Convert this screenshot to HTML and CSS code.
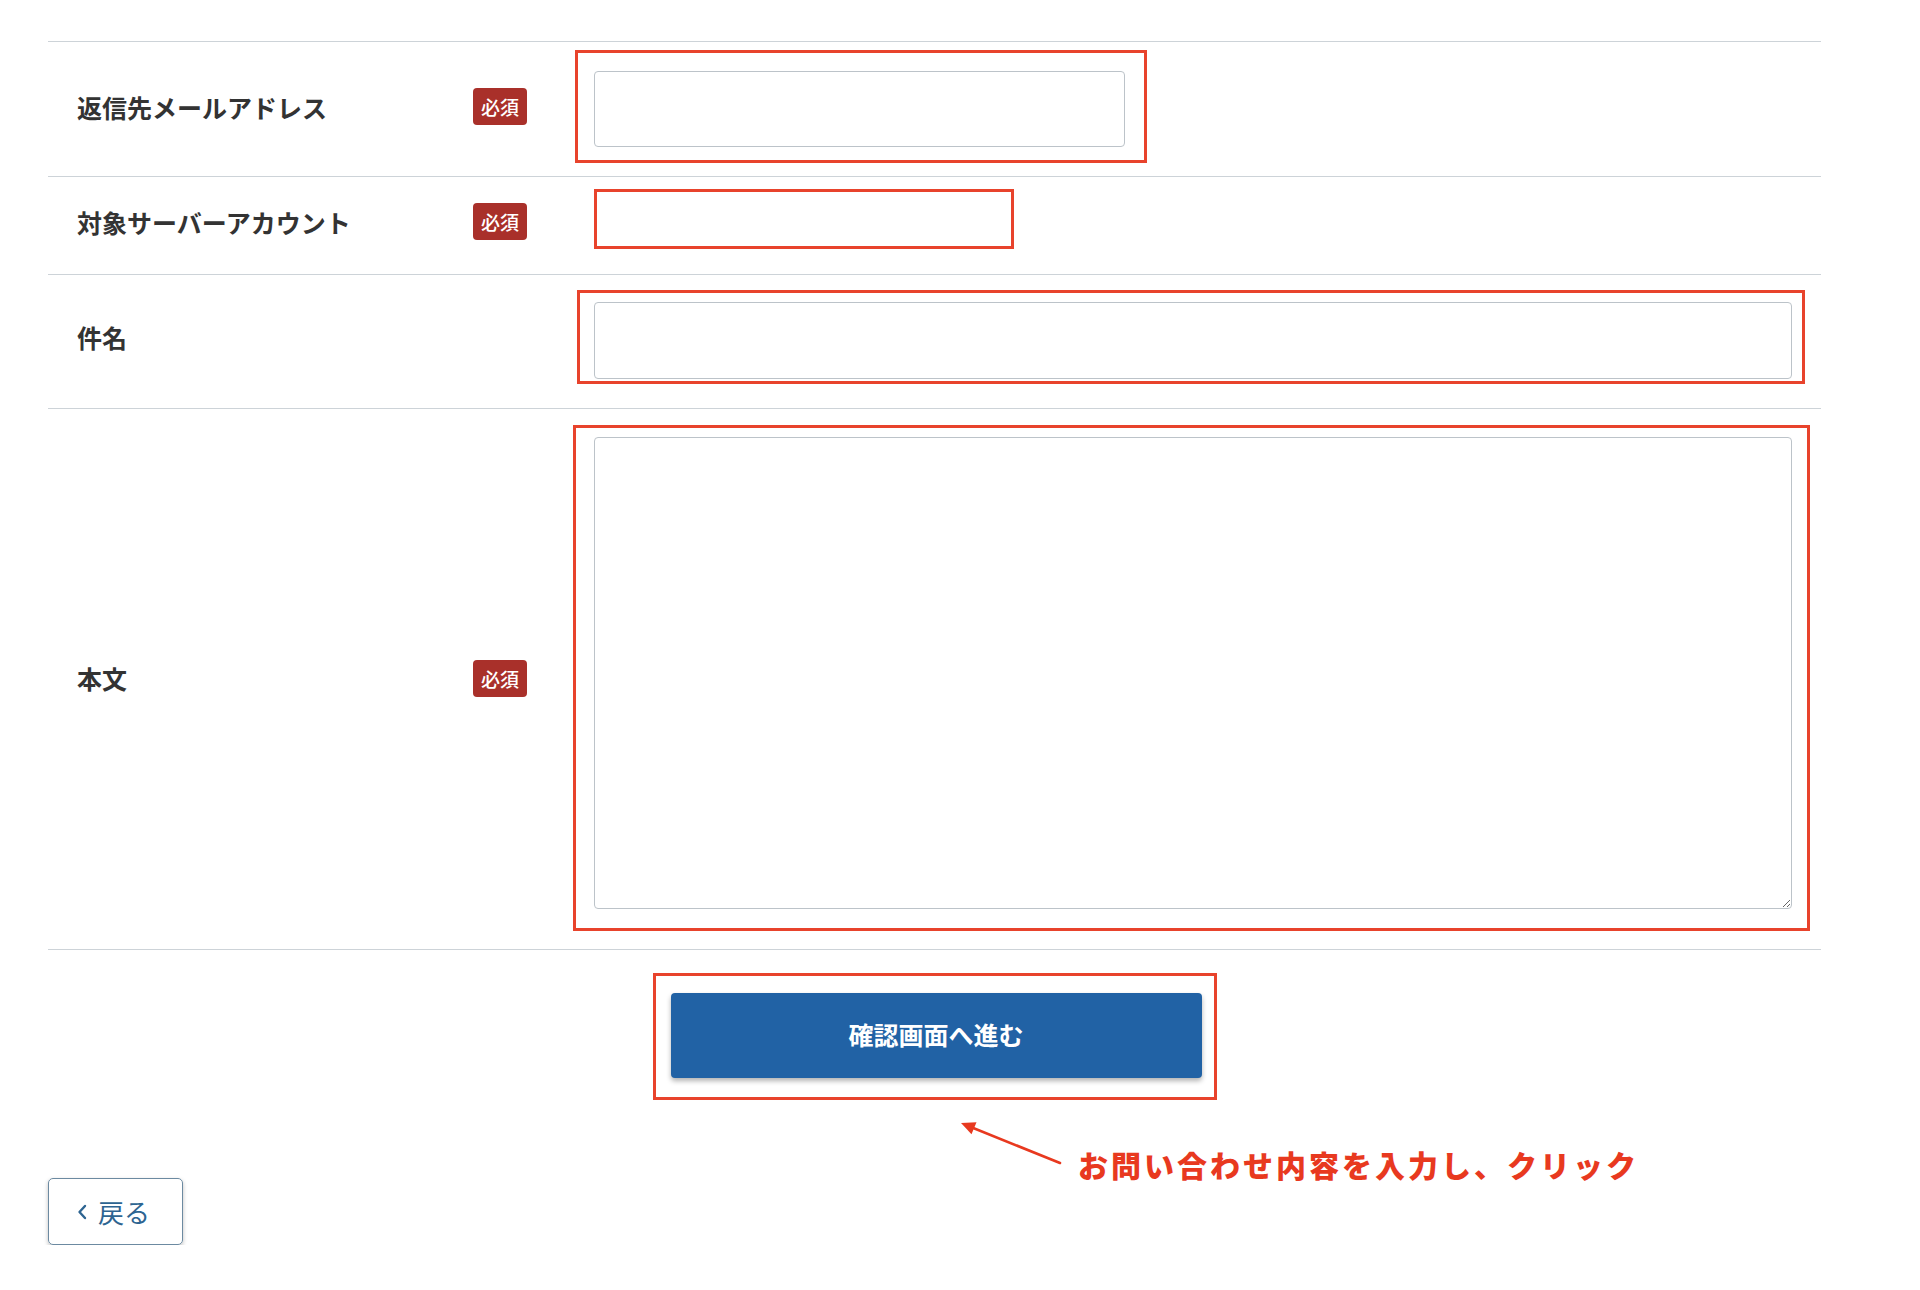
FILE: index.html
```html
<!DOCTYPE html>
<html lang="ja">
<head>
<meta charset="utf-8">
<title>お問い合わせ</title>
<link rel="stylesheet" href="styles.css">
</head>
<body>
<div class="page">
  <div class="form">
    <div class="row row-email">
      <div class="label-cell"><span class="label">返信先メールアドレス</span><span class="badge">必須</span></div>
      <div class="field"><div class="hl hl-email"><input class="input input-email" type="text"></div></div>
    </div>
    <div class="row row-server">
      <div class="label-cell label-cell-server"><span class="label">対象サーバーアカウント</span><span class="badge">必須</span></div>
      <div class="field"><div class="hl hl-server"></div></div>
    </div>
    <div class="row row-subject">
      <div class="label-cell"><span class="label">件名</span></div>
      <div class="field"><div class="hl hl-subject"><input class="input input-subject" type="text"></div></div>
    </div>
    <div class="row row-body">
      <div class="label-cell"><span class="label">本文</span><span class="badge">必須</span></div>
      <div class="field"><div class="hl hl-body"><textarea class="input textarea"></textarea></div></div>
    </div>
  </div>

  <div class="submit-area">
    <div class="hl hl-submit"><button class="btn-submit" type="button">確認画面へ進む</button></div>
  </div>

  <div class="annotation">
    <svg class="arrow" width="120" height="55" viewBox="0 0 120 55">
      <line x1="110" y1="48" x2="22" y2="12.5" stroke="#e8391f" stroke-width="2.6" stroke-linecap="round"/>
      <polygon points="11,8 21.5,19.3 26.5,7.2" fill="#e8391f"/>
    </svg>
    <span class="note">お問い合わせ内容を入力し、クリック</span>
  </div>

  <a class="back" href="#">
    <svg class="chev" width="10" height="16" viewBox="0 0 10 16"><path d="M8 2 L2.5 8 L8 14" fill="none" stroke="#2d6491" stroke-width="2.4" stroke-linecap="round" stroke-linejoin="round"/></svg>
    <span>戻る</span>
  </a>
</div>
</body>
</html>
```

FILE: styles.css
```css
* { box-sizing: border-box; }

html, body {
  margin: 0;
  padding: 0;
  background: #ffffff;
}

body {
  font-family: "Noto Sans CJK JP", "Noto Sans", sans-serif;
  color: #333333;
}

.page {
  width: 1773px;
  margin-left: 48px;
  padding-top: 41px;
}

.form {
  border-bottom: 1px solid #cdd3d8;
}

.row {
  display: flex;
  align-items: center;
  border-top: 1px solid #cdd3d8;
}

.row-email { padding: 8px 0 13px; }
.row-server { padding: 12px 0 25px; }
.row-subject { padding: 15px 0 24px; }
.row-body { padding: 16px 0 18px; }

.label-cell {
  width: 527px;
  flex: none;
  display: flex;
  align-items: center;
  justify-content: space-between;
  padding-left: 29px;
  padding-right: 48px;
}

.label-cell-server {
  padding-top: 5px;
}

.label {
  font-size: 25px;
  font-weight: 700;
  color: #333333;
  line-height: 1.2;
}

.badge {
  width: 54px;
  height: 37px;
  background: #a9302a;
  color: #ffffff;
  border-radius: 4px;
  font-size: 19px;
  font-weight: 500;
  line-height: 37px;
  text-align: center;
}

.field {
  flex: 1;
}

.hl {
  border: 3px solid #e8432c;
  width: fit-content;
}

.hl-email { padding: 18px 19px 13px 16px; }
.hl-server { width: 420px; height: 60px; margin-left: 19px; }
.hl-subject { margin-left: 2px; padding: 9px 10px 2px 14px; }
.hl-body { margin-left: -2px; padding: 9px 15px 19px 18px; }

.input {
  display: block;
  border: 1px solid #bcc3c9;
  border-radius: 4px;
  background: #ffffff;
  font-family: inherit;
  font-size: 18px;
  padding: 8px 12px;
  outline: none;
}

.input-email { width: 531px; height: 76px; }
.input-subject { width: 1198px; height: 77px; }
.textarea { width: 1198px; height: 472px; resize: vertical; }

.submit-area {
  display: flex;
  justify-content: center;
  padding-top: 23px;
}

.hl-submit {
  padding: 17px 12px 19px 15px;
}

.btn-submit {
  display: block;
  width: 531px;
  height: 85px;
  border: none;
  border-radius: 4px;
  background: #2162a5;
  color: #ffffff;
  font-family: inherit;
  font-size: 25px;
  font-weight: 700;
  padding-bottom: 4px;
  box-shadow: 0 3px 5px rgba(0, 0, 0, 0.3);
}

.annotation {
  display: flex;
  align-items: flex-start;
  height: 78px;
  padding-top: 15px;
  padding-left: 902px;
}

.arrow {
  flex: none;
  display: block;
}

.note {
  margin-top: 31px;
  margin-left: 8px;
  font-size: 30px;
  line-height: 36px;
  font-weight: 900;
  color: #e8391f;
  letter-spacing: 3px;
  white-space: nowrap;
}

.back {
  display: flex;
  align-items: center;
  justify-content: center;
  gap: 11px;
  width: 135px;
  height: 67px;
  border: 1px solid #6c8aa1;
  border-radius: 5px;
  box-shadow: 0 2px 4px rgba(0, 0, 0, 0.25);
  color: #2d6491;
  text-decoration: none;
  font-size: 26px;
  line-height: 1;
  padding-right: 4px;
}

.chev {
  display: block;
}
```
